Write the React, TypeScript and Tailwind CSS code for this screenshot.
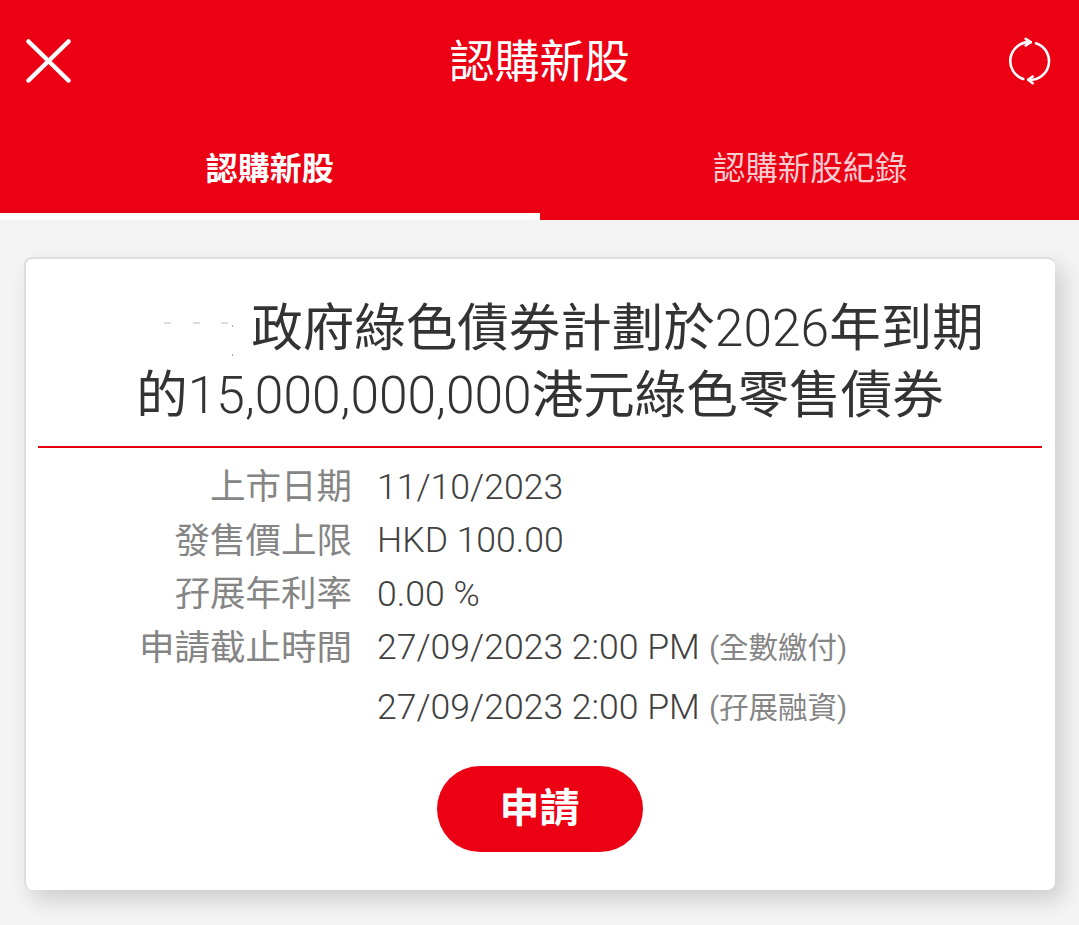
const FONT = "font-['Roboto','Noto_Sans_CJK_TC',sans-serif]";

function InfoRow({ label, value, note }: { label: string; value: string; note?: string }) {
  return (
    <div className="flex items-center h-[53.500px]">
      <div className="w-[314px] shrink-0 text-right text-[35.500px] leading-none font-normal text-[#858585]">{label}</div>
      <div className="ml-[25px] text-[35.600px] leading-none font-light text-[#404040] whitespace-nowrap">
        {value}
        {note && <span className="ml-[9px] text-[29.500px] font-normal text-[#858585] align-[1px]">{note}</span>}
      </div>
    </div>
  );
}

export default function App() {
  return (
    <div className={`${FONT} w-[1079px] h-[925px] overflow-hidden bg-[#f4f4f4]`}>
      {/* Header */}
      <div className="bg-[#ec0014] text-white">
        <div className="flex items-center justify-between h-[122px] pl-[26px] pr-[28px]">
          <svg width="45" height="44" viewBox="0 0 45 44" fill="none" stroke="white" strokeWidth="4.500" strokeLinecap="round">
            <path d="M2.500 2.500 L42.500 41.500" />
            <path d="M42.500 2.500 L2.500 41.500" />
          </svg>
          <div className="text-[45px] leading-none font-normal pt-[2px]">認購新股</div>
          <svg className="overflow-visible" width="43" height="45" viewBox="0 0 43 45" fill="none" stroke="white" strokeWidth="2.600" strokeLinecap="round" strokeLinejoin="round">
            <path d="M15.300 40 A18.900 18.900 0 0 1 22.700 3.200" />
            <path d="M17.700 -0.200 L22.700 3.200 L17.700 6.500" />
            <path d="M28 4.300 A18.750 18.750 0 0 1 20.300 40.800" />
            <path d="M24.700 37.500 L20.300 40.800 L24.700 44.200" />
          </svg>
        </div>
        <div className="flex h-[98px]">
          <div className="w-1/2 flex items-center justify-center pt-[3px] text-[32px] font-bold border-b-[7px] border-white">認購新股</div>
          <div className="w-1/2 flex items-center justify-center pb-[3px] pl-[2px] text-[32.400px] font-normal text-[#f9ccd0]">認購新股紀錄</div>
        </div>
      </div>

      {/* Card */}
      <div className="px-[24px] pt-[37px]">
        <div className="w-[1031px] h-[633px] bg-white rounded-[8px] border-t-2 border-l-2 border-[#dddddd] shadow-[8px_10px_22px_rgba(0,0,0,0.16)] pl-[12px] pr-[13px]">
          <div className="h-[187px] pt-[36px] text-center text-[51.500px] leading-[67px] font-normal text-[#333333]">
            <span className="relative inline-block w-[155px] h-[1px]">
              {/* leftovers of the masked-out characters */}
              <svg className="absolute left-0 top-[-33px]" width="155" height="45" fill="none">
                <path d="M68 11h7M97 11h7M125 11h7" stroke="#bbbbbb" />
                <path d="M136 14h1M136 43h1" stroke="#555555" />
              </svg>
            </span>
            政府綠色債券計劃於<span className="font-light">2026</span>年到期
            <br />
            的<span className="font-light">15,000,000,000</span>港元綠色零售債券
          </div>
          <div className="h-[2px] bg-[#e60012]" />
          <div className="pt-[13px]">
            <InfoRow label="上市日期" value="11/10/2023" />
            <InfoRow label="發售價上限" value="HKD 100.00" />
            <InfoRow label="孖展年利率" value="0.00 %" />
            <InfoRow label="申請截止時間" value="27/09/2023 2:00 PM" note="(全數繳付)" />
            <div className="h-[6px]" />
            <InfoRow label="" value="27/09/2023 2:00 PM" note="(孖展融資)" />
          </div>
          <div className="flex justify-center pt-[31px]">
            <button className="w-[206px] h-[86px] -ml-[1px] rounded-full bg-[#ec0014] text-white text-[40px] font-bold">申請</button>
          </div>
        </div>
      </div>
    </div>
  );
}
